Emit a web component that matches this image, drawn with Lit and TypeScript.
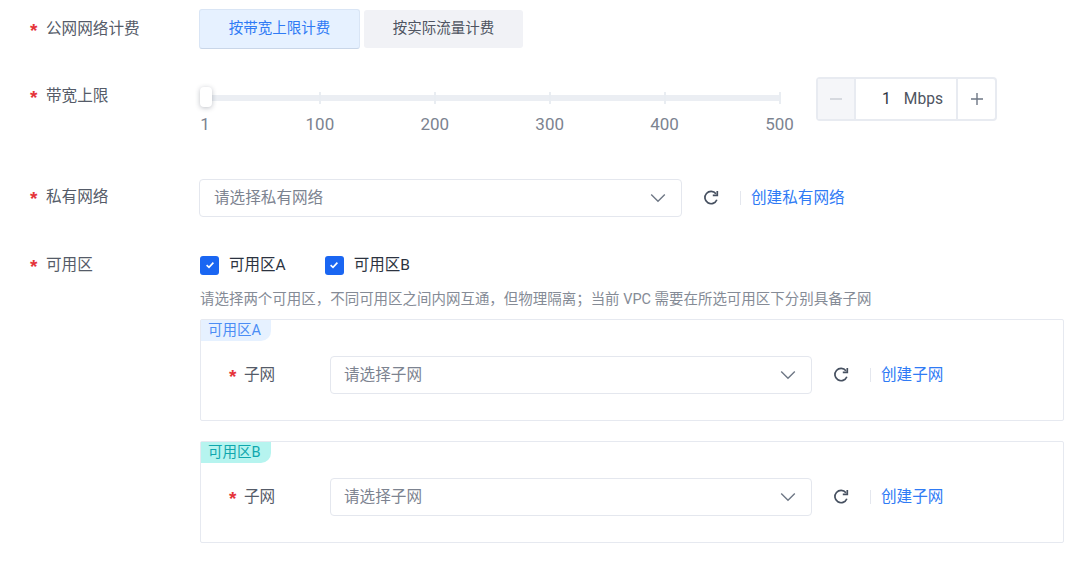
import { LitElement, html, css } from "lit";
import { customElement } from "lit/decorators.js";

const refresh = html`<svg class="refresh" viewBox="0 0 16 16" width="18" height="18" fill="none"><path d="M13.2 9.6A5.5 5.5 0 1 1 12.4 4.2" stroke="#465060" stroke-width="1.5"/><path d="M13.6 1.7v4h-4" stroke="#465060" stroke-width="1.5"/></svg>`;
const chevron = html`<svg class="chev" viewBox="0 0 16 10" width="16" height="10" fill="none"><path d="M1.2 1.6 8 8.2l6.8-6.6" stroke="#6e7785" stroke-width="1.4"/></svg>`;
const check = html`<svg viewBox="0 0 12 12" width="12" height="12" fill="none"><path d="M2.6 6.2 5 8.4l4.4-4.8" stroke="#fff" stroke-width="1.6"/></svg>`;

@customElement("app-root")
export class AppRoot extends LitElement {
  static styles = css`
    :host { display: block; width: 1080px; height: 567px; overflow: hidden; background: #fff; box-sizing: border-box; padding: 9px 16px 0 30px; font: 15.6px/22px Roboto, "Noto Sans CJK SC", sans-serif; color: #4b5563; }
    .row { display: grid; grid-template-columns: 170px 1fr; }
    .label { display: flex; align-items: center; gap: 7px; height: 22px; color: #555b68; }
    .star { width: 9px; font: 700 19px/22px "Liberation Sans", sans-serif; color: #e5343a; padding-top: 2px; height: 20px; }
    .r1 .label { margin-top: 9px; }
    .seg { display: flex; gap: 4px; align-items: center; height: 40px; }
    .seg div { display: flex; align-items: center; justify-content: center; box-sizing: border-box; font-size: 14.5px; border-radius: 3px; }
    .on { width: 161px; height: 40px; background: #e6f1ff; border: 1px solid #d9e5f5; border-bottom-color: #c9d6e8; color: #2f7bf5; margin-left: -1px; }
    .off { width: 159px; height: 38px; background: #f1f2f6; color: #4e5461; }
    .r2 { margin-top: 28px; height: 44px; }
    .r2 .label { margin-top: 8px; }
    .slider-line { display: flex; align-items: flex-start; }
    .slider { width: 594px; margin-right: 22px; flex: none; }
    .track { position: relative; height: 6px; margin: 18px 14px 0 5px; background: #ebeef3; }
    .tick { position: absolute; top: -3px; width: 2px; height: 12px; background: #e9edf2; }
    .thumb { position: absolute; left: -5px; top: -8px; width: 12px; height: 20px; background: #fff; border-radius: 4px; box-shadow: 0 1px 5px rgba(40,50,70,.3); }
    .marks { display: flex; justify-content: space-between; margin: 12px 14.5px 0 5px; color: #7c8390; font-size: 17px; line-height: 22px; }
    .marks span { width: 0; display: flex; justify-content: center; }
    .stepper { display: flex; width: 181px; height: 44px; box-sizing: border-box; border: 2px solid #e8ebf1; border-radius: 4px; flex: none; }
    .step { width: 37px; display: flex; align-items: center; justify-content: center; flex: none; }
    .step.dis { width: 36px; background: #f5f6f9; }
    .val { flex: 1; display: flex; align-items: center; justify-content: flex-end; gap: 13px; padding-right: 13px; border: solid #e8ebf1; border-width: 0 2px; color: #4e5461; font-size: 15.6px; }
    .val b { font-weight: 400; color: #2c3340; }
    .r3 { margin-top: 58px; }
    .ctl { display: flex; align-items: center; }
    .r3 .label { margin-top: 7px; }
    .select { box-sizing: border-box; height: 38px; border: 1.5px solid #e4e7ee; border-radius: 4px; display: flex; align-items: center; justify-content: space-between; padding: 0 15px 0 14px; color: #7c8390; flex: none; width: 483px; margin-left: -1px; }
    .refresh { margin-left: 20px; flex: none; }
    .sep { width: 1px; height: 14px; background: #e4e7ee; margin: 0 10px 0 20px; flex: none; }
    .link { color: #2f7bf5; }
    .r4 { margin-top: 0; padding-top: 38px; }
    .r4 .label { margin-top: -1px; }
    .checks { display: flex; height: 20px; align-items: center; }
    .check { display: flex; align-items: center; color: #2c3340; font-size: 15.5px; gap: 10px; margin-right: 39px; }
    .box { width: 19px; height: 19px; border-radius: 3px; background: #1a66f2; display: flex; align-items: center; justify-content: center; }
    .help { margin-top: 14px; font-size: 14.47px; line-height: 22px; color: #858b96; white-space: nowrap; }
    .panel { position: relative; box-sizing: border-box; height: 102px; border: 1px solid #e6e9f0; border-radius: 2px; padding: 36px 0 0 28px; display: flex; align-items: flex-start; margin-top: 8px; }
    .panel + .panel { margin-top: 20px; }
    .tag { position: absolute; left: 0; top: 0; width: 70px; height: 21px; border-radius: 0 0 10px 0; font-size: 14.5px; line-height: 21px; padding-left: 7px; box-sizing: border-box; }
    .tag.a { background: #e6f1ff; color: #4b8df5; }
    .tag.b { background: #b6f4ef; color: #0fa7ae; }
    .sub-label { display: flex; align-items: center; gap: 6px; width: 101px; height: 38px; color: #555b68; flex: none; }
    .panel .select { margin-left: 0; width: 482px; padding-left: 13px; }
    .panel .refresh { margin-left: 20px; }
    .panel .sep { margin: 0 10px 0 20px; }
  `;

  private chain(placeholder: string, linkText: string) {
    return html`<div class="ctl"><div class="select"><span>${placeholder}</span>${chevron}</div>${refresh}<span class="sep"></span><span class="link">${linkText}</span></div>`;
  }

  private panel(cls: string, name: string) {
    return html`<div class="panel"><div class="tag ${cls}">${name}</div><div class="sub-label"><span class="star">*</span><span>子网</span></div>${this.chain("请选择子网", "创建子网")}</div>`;
  }

  render() {
    const marks = ["1", "100", "200", "300", "400", "500"];
    return html`
      <div class="row r1"><div class="label"><span class="star">*</span><span>公网网络计费</span></div>
        <div class="seg"><div class="on">按带宽上限计费</div><div class="off">按实际流量计费</div></div></div>
      <div class="row r2"><div class="label"><span class="star">*</span><span>带宽上限</span></div>
        <div class="slider-line">
          <div class="slider"><div class="track">
            ${[20, 40, 60, 80, 100].map((p) => html`<span class="tick" style="left:calc(${p}% - 1px)"></span>`)}
            <span class="thumb"></span></div>
            <div class="marks">${marks.map((m) => html`<span>${m}</span>`)}</div></div>
          <div class="stepper"><div class="step dis"><svg width="14" height="14" viewBox="0 0 14 14"><path d="M1 7h12" stroke="#c9cdd4" stroke-width="1.4"/></svg></div>
            <div class="val"><b>1</b><span>Mbps</span></div>
            <div class="step"><svg width="14" height="14" viewBox="0 0 14 14"><path d="M1 7h12M7 1v12" stroke="#6e7785" stroke-width="1.4"/></svg></div></div>
        </div></div>
      <div class="row r3"><div class="label"><span class="star">*</span><span>私有网络</span></div>${this.chain("请选择私有网络", "创建私有网络")}</div>
      <div class="row r4"><div class="label"><span class="star">*</span><span>可用区</span></div>
        <div>
          <div class="checks"><div class="check"><span class="box">${check}</span>可用区A</div><div class="check"><span class="box">${check}</span>可用区B</div></div>
          <div class="help">请选择两个可用区，不同可用区之间内网互通，但物理隔离；当前 VPC 需要在所选可用区下分别具备子网</div>
          ${this.panel("a", "可用区A")}
          ${this.panel("b", "可用区B")}
        </div></div>`;
  }
}
